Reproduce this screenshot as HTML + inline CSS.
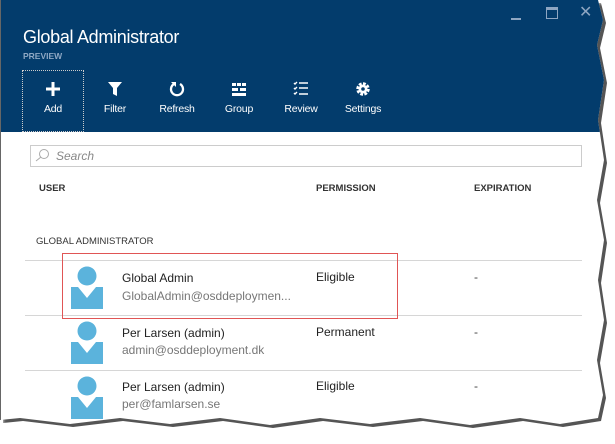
<!DOCTYPE html>
<html><head><style>
body{margin:0;width:615px;height:441px;background:#fff;overflow:hidden;font-family:"Liberation Sans",sans-serif;position:relative}
.shadow{position:absolute;left:3px;top:3px;width:615px;height:441px;background:#555;filter:blur(1.5px);clip-path:polygon(0 0,598px 0,603px 20px,597px 45px,604px 80px,598px 120px,604px 160px,597px 200px,604px 240px,598px 280px,604px 320px,597px 360px,603px 395px,598px 418px,560px 424px,520px 418px,470px 425px,420px 418px,370px 424px,320px 418px,270px 425px,220px 418px,170px 424px,120px 418px,70px 424px,20px 418px,0 420px)}
.page{position:absolute;left:0;top:0;width:615px;height:441px;background:#fff;clip-path:polygon(0 0,598px 0,603px 20px,597px 45px,604px 80px,598px 120px,604px 160px,597px 200px,604px 240px,598px 280px,604px 320px,597px 360px,603px 395px,598px 418px,560px 424px,520px 418px,470px 425px,420px 418px,370px 424px,320px 418px,270px 425px,220px 418px,170px 424px,120px 418px,70px 424px,20px 418px,0 420px);border-left:1px solid #666;box-sizing:border-box}
.hdr{position:absolute;left:0;top:0;width:615px;height:132px;background:#033c6c}
.t{position:absolute;color:#fff}
.tb{position:absolute;top:77px;width:60px;text-align:center;color:#fff;font-size:10.5px;letter-spacing:-0.2px}
.tb svg{display:block;margin:4px auto 6px}
.abs{position:absolute}
.line{position:absolute;left:24px;width:557px;height:1px;background:#d6d6d6}
.av{position:absolute;left:70px;width:32px;height:44px}
.n{position:absolute;left:121px;font-size:12px;color:#222}
.e{position:absolute;left:121px;font-size:12px;color:#777}
.p{position:absolute;left:315px;font-size:12px;color:#222}
.d{position:absolute;left:473px;font-size:12px;color:#444}
.h{position:absolute;font-size:9.5px;font-weight:bold;color:#333}
</style></head><body>
<div class="shadow"></div>
<div class="page">
<div class="hdr">
 <div class="t" style="left:22px;top:27px;font-size:18px;letter-spacing:-0.3px">Global Administrator</div>
 <div class="t" style="left:22px;top:51px;font-size:8.5px;color:#8fa8c4;font-weight:bold">PREVIEW</div>
 <div class="abs" style="left:510px;top:18px;width:10px;height:2px;background:#8ea6c2"></div>
 <div class="abs" style="left:545px;top:7px;width:10px;height:8px;border:1px solid #8ea6c2;border-top-width:3px"></div>
 <div class="t" style="left:578px;top:2px;font-size:16px;color:#8ea6c2">✕</div>
 <div class="abs" style="left:21px;top:70px;width:60px;height:60px;border:1px dotted #ccc"></div>
 <div class="tb" style="left:22px"><svg width="16" height="16"><path d="M8 1v14M1 8h14" stroke="#fff" stroke-width="3"/></svg>Add</div>
 <div class="tb" style="left:84px"><svg width="16" height="16"><path d="M1 1h14l-5 6v8l-4-2V7z" fill="#fff"/></svg>Filter</div>
 <div class="tb" style="left:146px"><svg width="16" height="16"><path d="M5 3A6 6 0 1 0 11 3" fill="none" stroke="#fff" stroke-width="2.3"/><path d="M2 1h5v5z" fill="#fff"/></svg>Refresh</div>
 <div class="tb" style="left:208px"><svg width="16" height="16"><path d="M1 2h4v3H1zM6 2h4v3H6zM11 2h4v3h-4zM1 7h6v3H1zM9 7h6v3H9zM1 12h14v3H1z" fill="#fff"/></svg>Group</div>
 <div class="tb" style="left:270px"><svg width="16" height="16"><path d="M1 2l1 1 2-2M1 7l1 1 2-2M1 12l1 1 2-2M6 2h9M6 7h9M6 13h9" fill="none" stroke="#fff" stroke-width="1.4"/></svg>Review</div>
 <div class="tb" style="left:332px"><svg width="16" height="16"><circle cx="8" cy="8" r="5" fill="none" stroke="#fff" stroke-width="3.5" stroke-dasharray="2.6 1.3"/><circle cx="8" cy="8" r="4.5" fill="#fff"/><circle cx="8" cy="8" r="1.8" fill="#033c6c"/></svg>Settings</div>
</div>
<div class="abs" style="left:29px;top:145px;width:550px;height:20px;border:1px solid #ccc"></div>
<svg class="abs" style="left:33px;top:148px" width="16" height="14"><circle cx="10" cy="6" r="4.5" fill="none" stroke="#aaa"/><path d="M7 9L2 13" stroke="#aaa"/></svg>
<div class="abs" style="left:55px;top:149px;font-size:12px;color:#888;font-style:italic">Search</div>
<div class="h" style="left:38px;top:183px">USER</div>
<div class="h" style="left:315px;top:183px">PERMISSION</div>
<div class="h" style="left:473px;top:183px">EXPIRATION</div>
<div class="abs" style="left:35px;top:236px;font-size:9.5px;color:#333">GLOBAL ADMINISTRATOR</div>
<div class="line" style="top:260px"></div>
<div class="line" style="top:315px"></div>
<div class="line" style="top:370px"></div>
<div class="abs" style="left:61px;top:253px;width:334px;height:64px;border:1px solid #e05555"></div>
<svg class="av" style="top:265px" viewBox="0 0 32 44"><circle cx="16" cy="11" r="9.5" fill="#5bb3dc"/><path d="M0 22h7l9 11 9-11h7v22H0z" fill="#5bb3dc"/></svg>
<svg class="av" style="top:320px" viewBox="0 0 32 44"><circle cx="16" cy="11" r="9.5" fill="#5bb3dc"/><path d="M0 22h7l9 11 9-11h7v22H0z" fill="#5bb3dc"/></svg>
<svg class="av" style="top:375px" viewBox="0 0 32 44"><circle cx="16" cy="11" r="9.5" fill="#5bb3dc"/><path d="M0 22h7l9 11 9-11h7v22H0z" fill="#5bb3dc"/></svg>
<div class="n" style="top:271px">Global Admin</div><div class="e" style="top:289px">GlobalAdmin@osddeploymen...</div>
<div class="p" style="top:270px">Eligible</div><div class="d" style="top:270px">-</div>
<div class="n" style="top:326px">Per Larsen (admin)</div><div class="e" style="top:343px">admin@osddeployment.dk</div>
<div class="p" style="top:325px">Permanent</div><div class="d" style="top:325px">-</div>
<div class="n" style="top:380px">Per Larsen (admin)</div><div class="e" style="top:397px">per@famlarsen.se</div>
<div class="p" style="top:379px">Eligible</div><div class="d" style="top:379px">-</div>
</div>
</body></html>
